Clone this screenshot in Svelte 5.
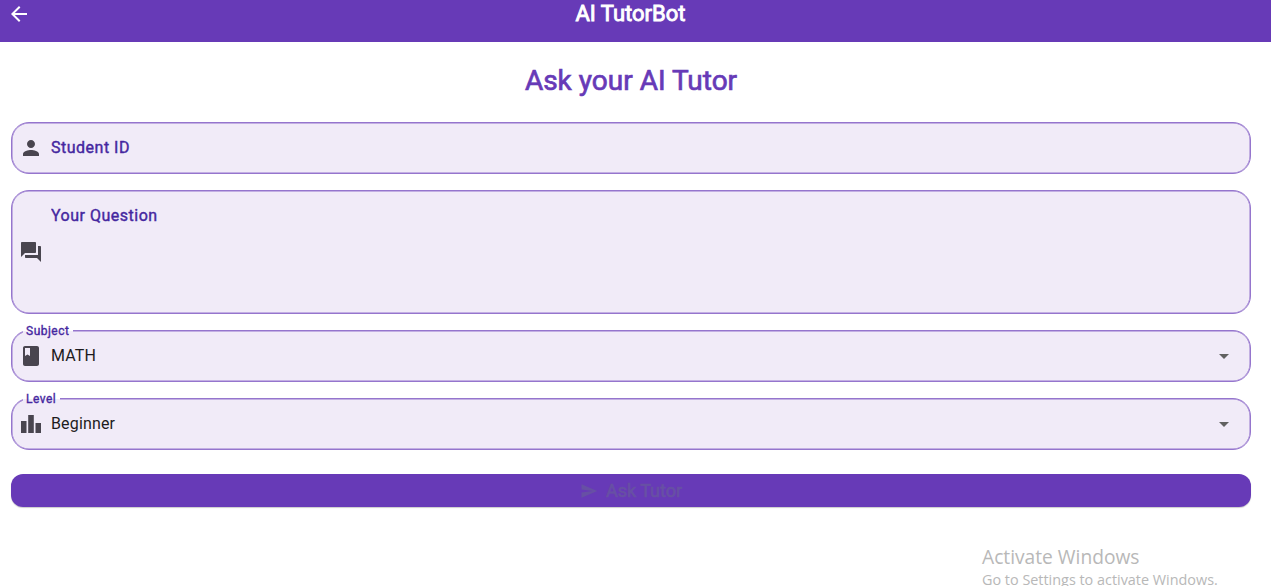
<script>
  const icons = {
    person: 'M12 12c2.21 0 4-1.79 4-4s-1.79-4-4-4-4 1.79-4 4 1.79 4 4 4zm0 2c-2.67 0-8 1.34-8 4v2h16v-2c0-2.66-5.33-4-8-4z',
    forum: 'M21 6h-2v9H6v2c0 .55.45 1 1 1h11l4 4V7c0-.55-.45-1-1-1zm-4 6V3c0-.55-.45-1-1-1H3c-.55 0-1 .45-1 1v14l4-4h10c.55 0 1-.45 1-1z',
    book: 'M18 2H6c-1.1 0-2 .9-2 2v16c0 1.1.9 2 2 2h12c1.1 0 2-.9 2-2V4c0-1.1-.9-2-2-2zM6 4h5v8l-2.5-1.5L6 12V4z',
    chart: 'M2 9h5.500v12H2zM9.200 3h5.600v18H9.200zM16.500 11H22v10h-5.500z'
  };

  const selects = [
    { label: 'Subject', value: 'MATH', icon: icons.book },
    { label: 'Level', value: 'Beginner', icon: icons.chart }
  ];

  let studentId = $state('');
  let question = $state('');
</script>

{#snippet icon(path)}
  <svg class="icon" viewBox="0 0 24 24"><path d={path} /></svg>
{/snippet}

<div class="page">
  <header class="app-bar">
    <button class="back" aria-label="Back">
      <svg viewBox="0 0 24 24"><path d="M20 11H7.83l5.59-5.59L12 4l-8 8 8 8 1.41-1.41L7.83 13H20v-2z" /></svg>
    </button>
    <span class="app-title">AI TutorBot</span>
  </header>

  <main>
    <h1>Ask your AI Tutor</h1>

    <label class="field">
      {@render icon(icons.person)}
      <input bind:value={studentId} placeholder="Student ID" />
    </label>

    <label class="field tall">
      {@render icon(icons.forum)}
      <textarea bind:value={question} placeholder="Your Question"></textarea>
    </label>

    {#each selects as item}
      <div class="field">
        <span class="floating">{item.label}</span>
        {@render icon(item.icon)}
        <span class="value">{item.value}</span>
        <svg class="arrow" viewBox="0 0 10 5"><path d="M0 0h10L5 5z" /></svg>
      </div>
    {/each}

    <button class="submit" disabled>
      <svg viewBox="0 0 24 24"><path d="M2.010 21L23 12 2.010 3 2 10l15 2-15 2z" /></svg>
      <span>Ask Tutor</span>
    </button>
  </main>

  <div class="watermark">
    <p class="watermark-title">Activate Windows</p>
    <p class="watermark-text">Go to Settings to activate Windows.</p>
  </div>
</div>

<style>
  .page {
    position: relative;
    height: 586px;
    overflow: hidden;
    background: #fff;
    font-family: Roboto, sans-serif;
  }

  .app-bar {
    display: grid;
    grid-template-columns: 1fr auto 1fr;
    height: 28px;
    padding: 0 17px 14px 7px;
    align-items: center;
    background: #673ab7;
    color: #fff;
  }

  button {
    border: 0;
    padding: 0;
    font-family: inherit;
  }

  .back {
    width: 24px;
    height: 24px;
    background: none;
  }

  .back svg {
    display: block;
    width: 24px;
    height: 24px;
    fill: #fff;
  }

  .app-title {
    font-size: 22px;
    line-height: 28px;
    font-weight: 400;
    -webkit-text-stroke: 0.9px currentColor;
  }

  main {
    display: flex;
    flex-direction: column;
    gap: 16px;
    padding: 20px 20px 0 11px;
  }

  h1 {
    margin: 0 0 4px;
    height: 40px;
    line-height: 38px;
    font-size: 28px;
    font-weight: 400;
    -webkit-text-stroke: 0.7px currentColor;
    text-align: center;
    color: #673ab7;
  }

  .field {
    position: relative;
    display: flex;
    align-items: center;
    box-sizing: border-box;
    height: 52px;
    padding: 0 21px 0 7px;
    border: 1px solid #9575cd;
    border-radius: 18px;
    box-shadow: inset 0 0 0 0.5px #9575cd;
    background: #f1ebf8;
  }

  .tall {
    height: 124px;
  }

  .icon {
    flex: none;
    width: 24px;
    height: 24px;
    margin-right: 8px;
    fill: #49454f;
  }

  input,
  textarea {
    flex: 1;
    height: 24px;
    padding: 0;
    border: 0;
    outline: 0;
    resize: none;
    background: none;
    font: 400 16px/24px Roboto, sans-serif;
    letter-spacing: 0.5px;
    color: #1d1b20;
  }

  textarea {
    height: 96px;
  }

  input::placeholder,
  textarea::placeholder {
    color: #4527a0;
    opacity: 1;
    -webkit-text-stroke: 0.4px #4527a0;
  }

  .value {
    flex: 1;
    font-size: 16px;
    line-height: 24px;
    letter-spacing: 0.15px;
    color: #1d1b20;
  }

  .arrow {
    width: 10px;
    height: 5px;
    margin-top: 1px;
    fill: #616161;
  }

  /* label sits in a gap of the outline */
  .floating {
    position: absolute;
    top: -8px;
    left: 11px;
    padding: 0 4px 0 3px;
    line-height: 16px;
    font-size: 12px;
    font-weight: 400;
    -webkit-text-stroke: 0.35px currentColor;
    letter-spacing: 0.5px;
    color: #4527a0;
    background: linear-gradient(#fff 8px, #f1ebf8 8px);
  }

  .submit {
    display: flex;
    align-items: center;
    justify-content: center;
    gap: 8px;
    height: 33px;
    margin-top: 8px;
    border-radius: 12px;
    background: #673ab7;
    box-shadow: 0 1px 1px rgba(0, 0, 0, 0.2);
    color: #6750a4;
    font-size: 18px;
    font-weight: 400;
    -webkit-text-stroke: 0.6px currentColor;
  }

  .submit svg {
    width: 18px;
    height: 18px;
    fill: currentColor;
  }

  .watermark {
    position: absolute;
    left: 982px;
    top: 543px;
    font-family: "Open Sans", "Noto Sans", sans-serif;
    color: #b8b8b8;
    white-space: nowrap;
  }

  .watermark p {
    margin: 0;
  }

  .watermark-title {
    font-size: 19.2px;
    line-height: 28px;
  }

  .watermark-text {
    font-size: 14.4px;
    line-height: 18px;
  }
</style>
